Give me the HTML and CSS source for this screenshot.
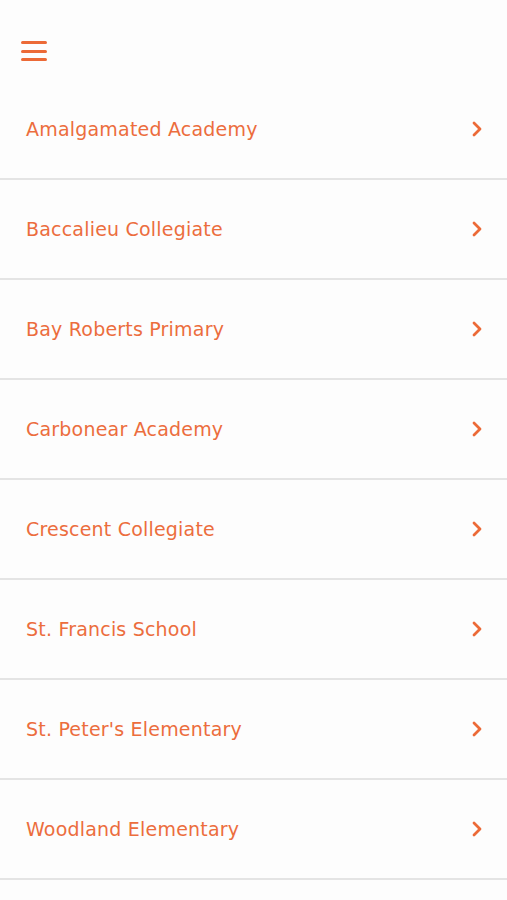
FILE: index.html
```html
<!DOCTYPE html>
<html lang="en">
  <head>
    <meta charset="UTF-8" />
    <title>Schools</title>
    <link rel="stylesheet" href="styles.css">
  </head>
  <body>
    <div id="top-bar">
      <button class="menu-btn" aria-label="Menu">
        <span></span><span></span><span></span>
      </button>
    </div>

    <!-- list of schools -->
    <ul id="school-list">
      <li><span>Amalgamated Academy</span><svg class="chev" viewBox="0 0 12 16"><path d="M3 2 L9 8 L3 14" /></svg></li>
      <li><span>Baccalieu Collegiate</span><svg class="chev" viewBox="0 0 12 16"><path d="M3 2 L9 8 L3 14" /></svg></li>
      <li><span>Bay Roberts Primary</span><svg class="chev" viewBox="0 0 12 16"><path d="M3 2 L9 8 L3 14" /></svg></li>
      <li><span>Carbonear Academy</span><svg class="chev" viewBox="0 0 12 16"><path d="M3 2 L9 8 L3 14" /></svg></li>
      <li><span>Crescent Collegiate</span><svg class="chev" viewBox="0 0 12 16"><path d="M3 2 L9 8 L3 14" /></svg></li>
      <li><span>St. Francis School</span><svg class="chev" viewBox="0 0 12 16"><path d="M3 2 L9 8 L3 14" /></svg></li>
      <li><span>St. Peter's Elementary</span><svg class="chev" viewBox="0 0 12 16"><path d="M3 2 L9 8 L3 14" /></svg></li>
      <li><span>Woodland Elementary</span><svg class="chev" viewBox="0 0 12 16"><path d="M3 2 L9 8 L3 14" /></svg></li>
    </ul>
  </body>
</html>
```
FILE: styles.css
```css
body,
html {
  margin: 0;
  padding: 0;
}
body {
  background-color: #fdfdfd;
  font-family: "DejaVu Sans", Verdana, sans-serif;
  color: #ec6d3d;
}
#top-bar {
  height: 80px;
  display: flex;
  align-items: center;
  padding-left: 21px;
  box-sizing: border-box;
}
.menu-btn {
  border: 0;
  background: none;
  padding: 0;
  width: 26px;
  display: flex;
  flex-direction: column;
  gap: 5.5px;
  margin-top: 22px;
}
.menu-btn span {
  display: block;
  height: 3px;
  border-radius: 2px;
  background-color: #ec6a37;
}
#school-list {
  list-style: none;
  margin: 0;
  padding: 0;
}
#school-list li {
  height: 100px;
  display: flex;
  align-items: center;
  justify-content: space-between;
  padding: 0 24px 0 26px;
  border-bottom: 2px solid #e4e4e4;
  box-sizing: border-box;
  font-size: 19px;
  letter-spacing: 0.2px;
}
.chev {
  width: 12px;
  height: 16px;
  fill: none;
  stroke: #ec6a37;
  stroke-width: 2.8;
  stroke-linecap: round;
  stroke-linejoin: round;
}
```
